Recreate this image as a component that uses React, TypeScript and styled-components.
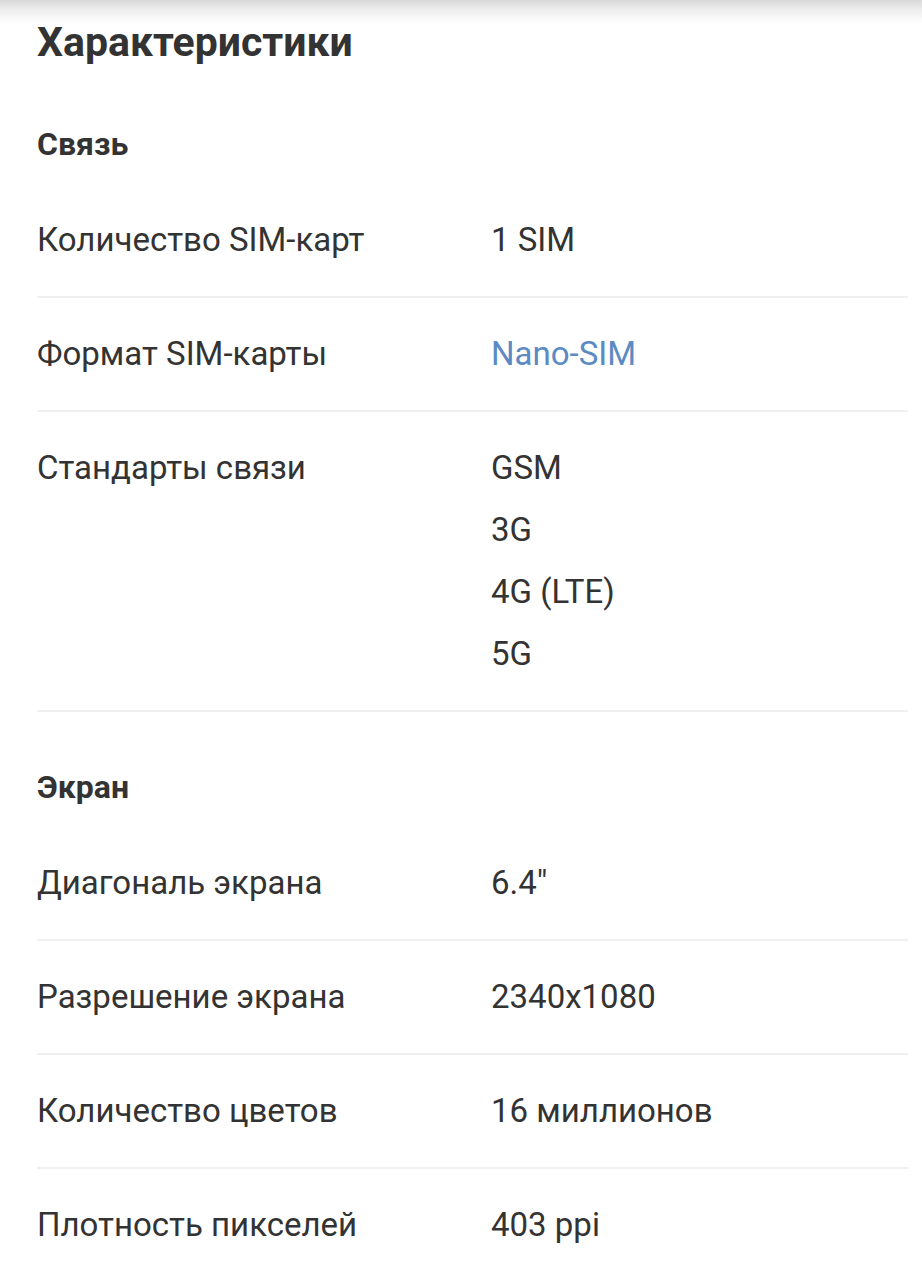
import React from "react";
import styled, { createGlobalStyle } from "styled-components";

const GlobalStyle = createGlobalStyle`
  html, body { margin: 0; padding: 0; background: #ffffff; }
  body { font-family: Roboto, "Noto Sans", "Liberation Sans", sans-serif; color: #333333; }
`;

const Page = styled.div`
  position: relative;
  min-height: 1280px;
  background: #ffffff;
`;

const TopShadow = styled.div`
  position: absolute;
  left: 0;
  right: 0;
  top: 0;
  height: 26px;
  background: linear-gradient(to bottom, #d9d9d9 0%, #ececec 35%, #fafafa 75%, rgba(255,255,255,0) 100%);
`;

const Content = styled.div`
  padding: 0 14px 0 37px;
`;

const Title = styled.h1`
  margin: 0;
  padding-top: 18px;
  height: 51px;
  font-size: 41px;
  line-height: 48px;
  font-weight: 700;
  color: #333333;
`;

const SectionTitle = styled.h2`
  margin: 0;
  padding: 55px 0 20px;
  font-size: 32px;
  line-height: 40px;
  font-weight: 700;
  color: #333333;
`;

const Row = styled.div<{ $last?: boolean }>`
  display: grid;
  grid-template-columns: 454px 1fr;
  padding: 25px 0;
  border-bottom: ${(p) => (p.$last ? "none" : "2px solid #f0f0f0")};
`;

const Label = styled.div`
  font-size: 33px;
  line-height: 62px;
  color: #333333;
`;

const Values = styled.div`
  display: flex;
  flex-direction: column;
`;

const Value = styled.span<{ $link?: boolean }>`
  font-size: 33px;
  line-height: 62px;
  color: ${(p) => (p.$link ? "#5b8ac4" : "#333333")};
`;

type Item = { label: string; values: string[]; link?: boolean };
type Section = { title: string; items: Item[] };

const sections: Section[] = [
  {
    title: "Связь",
    items: [
      { label: "Количество SIM-карт", values: ["1 SIM"] },
      { label: "Формат SIM-карты", values: ["Nano-SIM"], link: true },
      { label: "Стандарты связи", values: ["GSM", "3G", "4G (LTE)", "5G"] },
    ],
  },
  {
    title: "Экран",
    items: [
      { label: "Диагональ экрана", values: ["6.4\""] },
      { label: "Разрешение экрана", values: ["2340x1080"] },
      { label: "Количество цветов", values: ["16 миллионов"] },
      { label: "Плотность пикселей", values: ["403 ppi"] },
    ],
  },
];

export default function App() {
  return (
    <>
      <GlobalStyle />
      <Page>
        <TopShadow />
        <Content>
          <Title>Характеристики</Title>
          {sections.map((s, si) => (
            <section key={s.title}>
              <SectionTitle>{s.title}</SectionTitle>
              {s.items.map((it, i) => (
                <Row key={it.label} $last={si === sections.length - 1 && i === s.items.length - 1}>
                  <Label>{it.label}</Label>
                  <Values>
                    {it.values.map((v) => (
                      <Value key={v} $link={it.link}>{v}</Value>
                    ))}
                  </Values>
                </Row>
              ))}
            </section>
          ))}
        </Content>
      </Page>
    </>
  );
}
